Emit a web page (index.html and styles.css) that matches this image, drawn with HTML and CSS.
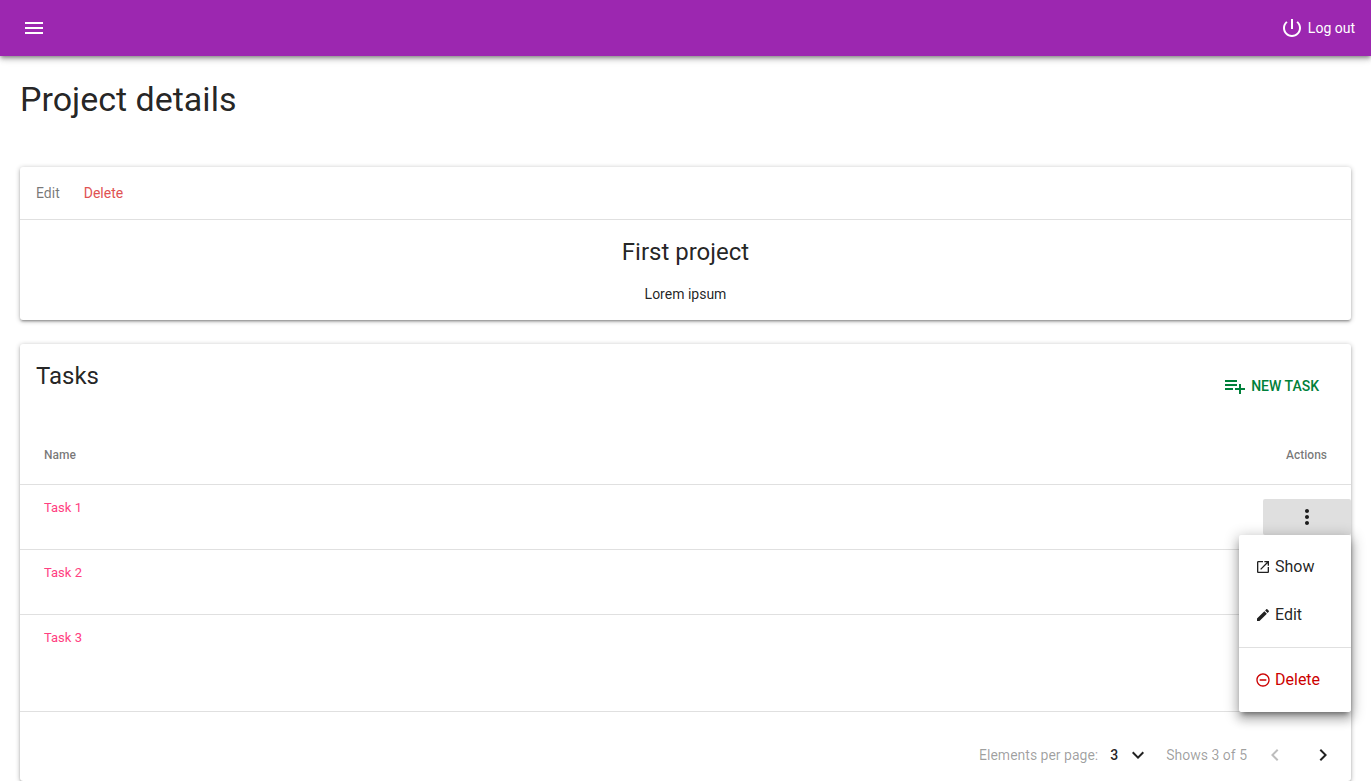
FILE: index.html
```html
<!DOCTYPE html>
<html lang="en">
<head>
  <meta charset="utf-8">
  <meta name="viewport" content="width=device-width, initial-scale=1">
  <title>Project details</title>
  <link rel="stylesheet" href="styles.css">
</head>
<body>
  <header class="toolbar">
    <button class="icon-button" type="button" aria-label="Open menu">
      <svg class="icon" viewBox="0 0 24 24" aria-hidden="true"><path d="M3 18h18v-2H3v2zm0-5h18v-2H3v2zm0-7v2h18V6H3z"/></svg>
    </button>
    <a class="logout" href="#logout">
      <svg class="icon" viewBox="0 0 24 24" aria-hidden="true"><path d="M13 3h-2v10h2V3zm4.83 2.17l-1.42 1.42C17.99 7.86 19 9.81 19 12c0 3.87-3.13 7-7 7s-7-3.13-7-7c0-2.19 1.01-4.14 2.58-5.42L6.17 5.17C4.23 6.82 3 9.26 3 12c0 4.97 4.03 9 9 9s9-4.03 9-9c0-2.74-1.23-5.18-3.17-6.83z"/></svg>
      <span>Log out</span>
    </a>
  </header>

  <main class="content">
    <h1 class="page-title">Project details</h1>

    <section class="card">
      <nav class="card-nav">
        <a class="nav-link" href="#edit">Edit</a>
        <a class="nav-link nav-link-danger" href="#delete">Delete</a>
      </nav>
      <div class="project">
        <h2 class="card-title">First project</h2>
        <p class="description">Lorem ipsum</p>
      </div>
    </section>

    <section class="card">
      <div class="tasks-header">
        <h2 class="card-title">Tasks</h2>
        <button class="new-task" type="button">
          <svg class="icon" viewBox="0 0 24 24" aria-hidden="true"><path d="M14 10H2v2h12v-2zm0-4H2v2h12V6zm4 8v-4h-2v4h-4v2h4v4h2v-4h4v-2h-4zM2 16h8v-2H2v2z"/></svg>
          <span>NEW TASK</span>
        </button>
      </div>

      <table class="tasks">
        <thead>
          <tr><th>Name</th><th class="actions-head">Actions</th></tr>
        </thead>
        <tbody>
          <tr>
            <td><a class="task-link" href="#task-1">Task 1</a></td>
            <td class="actions">
              <div class="menu-anchor">
                <button class="more more-open" type="button" aria-label="Task 1 actions" aria-expanded="true">
                  <svg class="icon" viewBox="0 0 24 24" aria-hidden="true"><path d="M12 8c1.1 0 2-.9 2-2s-.9-2-2-2-2 .9-2 2 .9 2 2 2zm0 2c-1.1 0-2 .9-2 2s.9 2 2 2 2-.9 2-2-.9-2-2-2zm0 6c-1.1 0-2 .9-2 2s.9 2 2 2 2-.9 2-2-.9-2-2-2z"/></svg>
                </button>
                <div class="menu">
                  <a class="menu-item" href="#show">
                    <svg class="menu-icon" viewBox="0 0 24 24" aria-hidden="true"><path d="M19 19H5V5h7V3H5c-1.11 0-2 .9-2 2v14c0 1.1.89 2 2 2h14c1.1 0 2-.9 2-2v-7h-2v7zM14 3v2h3.59l-9.83 9.83 1.41 1.41L19 6.41V10h2V3h-7z"/></svg>
                    <span>Show</span>
                  </a>
                  <a class="menu-item" href="#edit-task">
                    <svg class="menu-icon" viewBox="0 0 24 24" aria-hidden="true"><path d="M3 17.25V21h3.75L17.81 9.94l-3.75-3.75L3 17.25zM20.71 7.04c.39-.39.39-1.02 0-1.41l-2.34-2.34c-.39-.39-1.02-.39-1.41 0l-1.83 1.83 3.75 3.75 1.83-1.83z"/></svg>
                    <span>Edit</span>
                  </a>
                  <hr class="menu-divider">
                  <a class="menu-item menu-item-danger" href="#delete-task">
                    <svg class="menu-icon" viewBox="0 0 24 24" aria-hidden="true"><path d="M7 11v2h10v-2H7zm5-9C6.48 2 2 6.48 2 12s4.48 10 10 10 10-4.48 10-10S17.52 2 12 2zm0 18c-4.41 0-8-3.59-8-8s3.59-8 8-8 8 3.59 8 8-3.59 8-8 8z"/></svg>
                    <span>Delete</span>
                  </a>
                </div>
              </div>
            </td>
          </tr>
          <tr>
            <td><a class="task-link" href="#task-2">Task 2</a></td>
            <td class="actions">
              <button class="more" type="button" aria-label="Task 2 actions">
                <svg class="icon" viewBox="0 0 24 24" aria-hidden="true"><path d="M12 8c1.1 0 2-.9 2-2s-.9-2-2-2-2 .9-2 2 .9 2 2 2zm0 2c-1.1 0-2 .9-2 2s.9 2 2 2 2-.9 2-2-.9-2-2-2zm0 6c-1.1 0-2 .9-2 2s.9 2 2 2 2-.9 2-2-.9-2-2-2z"/></svg>
              </button>
            </td>
          </tr>
          <tr>
            <td><a class="task-link" href="#task-3">Task 3</a></td>
            <td class="actions">
              <button class="more" type="button" aria-label="Task 3 actions">
                <svg class="icon" viewBox="0 0 24 24" aria-hidden="true"><path d="M12 8c1.1 0 2-.9 2-2s-.9-2-2-2-2 .9-2 2 .9 2 2 2zm0 2c-1.1 0-2 .9-2 2s.9 2 2 2 2-.9 2-2-.9-2-2-2zm0 6c-1.1 0-2 .9-2 2s.9 2 2 2 2-.9 2-2-.9-2-2-2z"/></svg>
              </button>
            </td>
          </tr>
        </tbody>
      </table>

      <footer class="pagination">
        <label for="page-size">Elements per page:</label>
        <span class="select-wrap">
          <select id="page-size" class="page-size">
            <option>3</option>
            <option>5</option>
          </select>
          <svg class="icon select-arrow" viewBox="0 0 24 24" aria-hidden="true"><path d="M7.41 8.59L12 13.17l4.59-4.58L18 10l-6 6-6-6 1.41-1.41z"/></svg>
        </span>
        <span>Shows 3 of 5</span>
        <span class="pager">
          <button class="page-button" type="button" aria-label="Previous page" disabled>
            <svg class="icon" viewBox="0 0 24 24" aria-hidden="true"><path d="M15.41 7.41L14 6l-6 6 6 6 1.41-1.41L10.83 12z"/></svg>
          </button>
          <button class="page-button" type="button" aria-label="Next page">
            <svg class="icon" viewBox="0 0 24 24" aria-hidden="true"><path d="M10 6L8.59 7.41 13.17 12l-4.58 4.59L10 18l6-6z"/></svg>
          </button>
        </span>
      </footer>
    </section>
  </main>
</body>
</html>
```
FILE: styles.css
```css
*, *::before, *::after { box-sizing: border-box; }

body {
  margin: 0;
  background: #fff;
  color: rgba(0, 0, 0, .87);
  font: 400 14px/20px Roboto, "Liberation Sans", sans-serif;
}

h1, h2, p { margin: 0; font-weight: 400; }
a { color: inherit; text-decoration: none; }

button {
  padding: 0;
  border: 0;
  background: transparent;
  color: inherit;
  font: inherit;
  cursor: pointer;
}

.icon { display: block; flex: none; width: 24px; height: 24px; fill: currentColor; }

.toolbar {
  position: relative;
  display: flex;
  align-items: center;
  justify-content: space-between;
  height: 56px;
  padding: 0 16px 0 14px;
  background: #9c27b0;
  color: #fff;
  box-shadow: 0 2px 4px -1px rgba(0, 0, 0, .4), 0 4px 5px rgba(0, 0, 0, .14), 0 1px 10px rgba(0, 0, 0, .12);
}

.icon-button { display: grid; place-items: center; width: 40px; height: 40px; }
.logout { display: flex; align-items: center; gap: 4px; }

.content { padding: 23px 20px 0; }
.page-title { margin-bottom: 48px; font-size: 34px; line-height: 40px; }

.card {
  margin-bottom: 24px;
  border-radius: 3px;
  background: #fff;
  box-shadow: 0 1px 5px rgba(0, 0, 0, .3), 0 2px 2px rgba(0, 0, 0, .14), 0 3px 1px -2px rgba(0, 0, 0, .12);
}
.card:last-child { margin-bottom: 0; }

.card-nav {
  display: flex;
  gap: 24px;
  padding: 16px;
  border-bottom: 1px solid rgba(0, 0, 0, .12);
}
.nav-link { color: rgba(0, 0, 0, .54); }
.nav-link-danger { color: #e05252; }

.project { padding: 16px; text-align: center; }
.card-title { font-size: 24px; line-height: 32px; }
.description { margin-top: 16px; }

.tasks-header {
  display: flex;
  align-items: flex-start;
  justify-content: space-between;
  padding: 16px 24px 22px 16px;
}

.new-task {
  display: flex;
  align-items: center;
  gap: 4px;
  height: 36px;
  margin-top: 8px;
  padding: 0 8px;
  color: #00803a;
  font-weight: 500;
}

.tasks { width: 100%; border-collapse: separate; border-spacing: 0; font-size: 13px; }
.tasks th {
  height: 58px;
  padding: 0 24px;
  color: rgba(0, 0, 0, .54);
  font-size: 12px;
  font-weight: 500;
  text-align: left;
}
.tasks .actions-head { text-align: right; }
.tasks td {
  height: 65px;
  padding: 13px 24px;
  border-top: 1px solid rgba(0, 0, 0, .12);
  vertical-align: top;
}
.tasks tbody tr:last-child td { height: 97px; }
.tasks .actions { width: 88px; padding: 14px 0 0; }
.task-link { color: #ff4081; }

.menu-anchor { position: relative; }
.more { display: grid; place-items: center; width: 88px; height: 36px; margin-left: auto; border-radius: 2px; }
.more-open { background: #dfdfdf; }

.menu {
  position: absolute;
  z-index: 1;
  top: 100%;
  right: 0;
  width: 112px;
  padding: 8px 0;
  border-radius: 2px;
  background: #fff;
  box-shadow: 0 5px 5px -3px rgba(0, 0, 0, .4), 0 8px 10px 1px rgba(0, 0, 0, .14), 0 3px 14px 2px rgba(0, 0, 0, .24);
}
.menu-item {
  display: flex;
  align-items: center;
  gap: 4px;
  height: 48px;
  padding: 0 16px;
  font-size: 16px;
}
.menu-item-danger { color: #cc0000; }
.menu-icon { flex: none; width: 16px; height: 16px; fill: currentColor; }
.menu-divider { height: 1px; margin: 8px 0; border: 0; background: rgba(0, 0, 0, .12); }

.pagination {
  display: flex;
  align-items: center;
  justify-content: flex-end;
  padding: 23px 8px 6px;
  border-top: 1px solid rgba(0, 0, 0, .12);
  color: rgba(0, 0, 0, .38);
}
.select-wrap { display: grid; align-items: center; width: 40px; margin: 0 16px 0 12px; }
.page-size {
  grid-area: 1 / 1;
  appearance: none;
  width: 100%;
  height: 24px;
  padding: 0;
  border: 0;
  background: transparent;
  color: rgba(0, 0, 0, .87);
  font: inherit;
  font-weight: 500;
}
.select-arrow { grid-area: 1 / 1; justify-self: end; color: rgba(0, 0, 0, .87); pointer-events: none; }

.pager { display: flex; gap: 8px; margin-left: 8px; }
.page-button { display: grid; place-items: center; width: 40px; height: 40px; color: rgba(0, 0, 0, .87); }
.page-button:disabled { color: rgba(0, 0, 0, .26); cursor: default; }
```
